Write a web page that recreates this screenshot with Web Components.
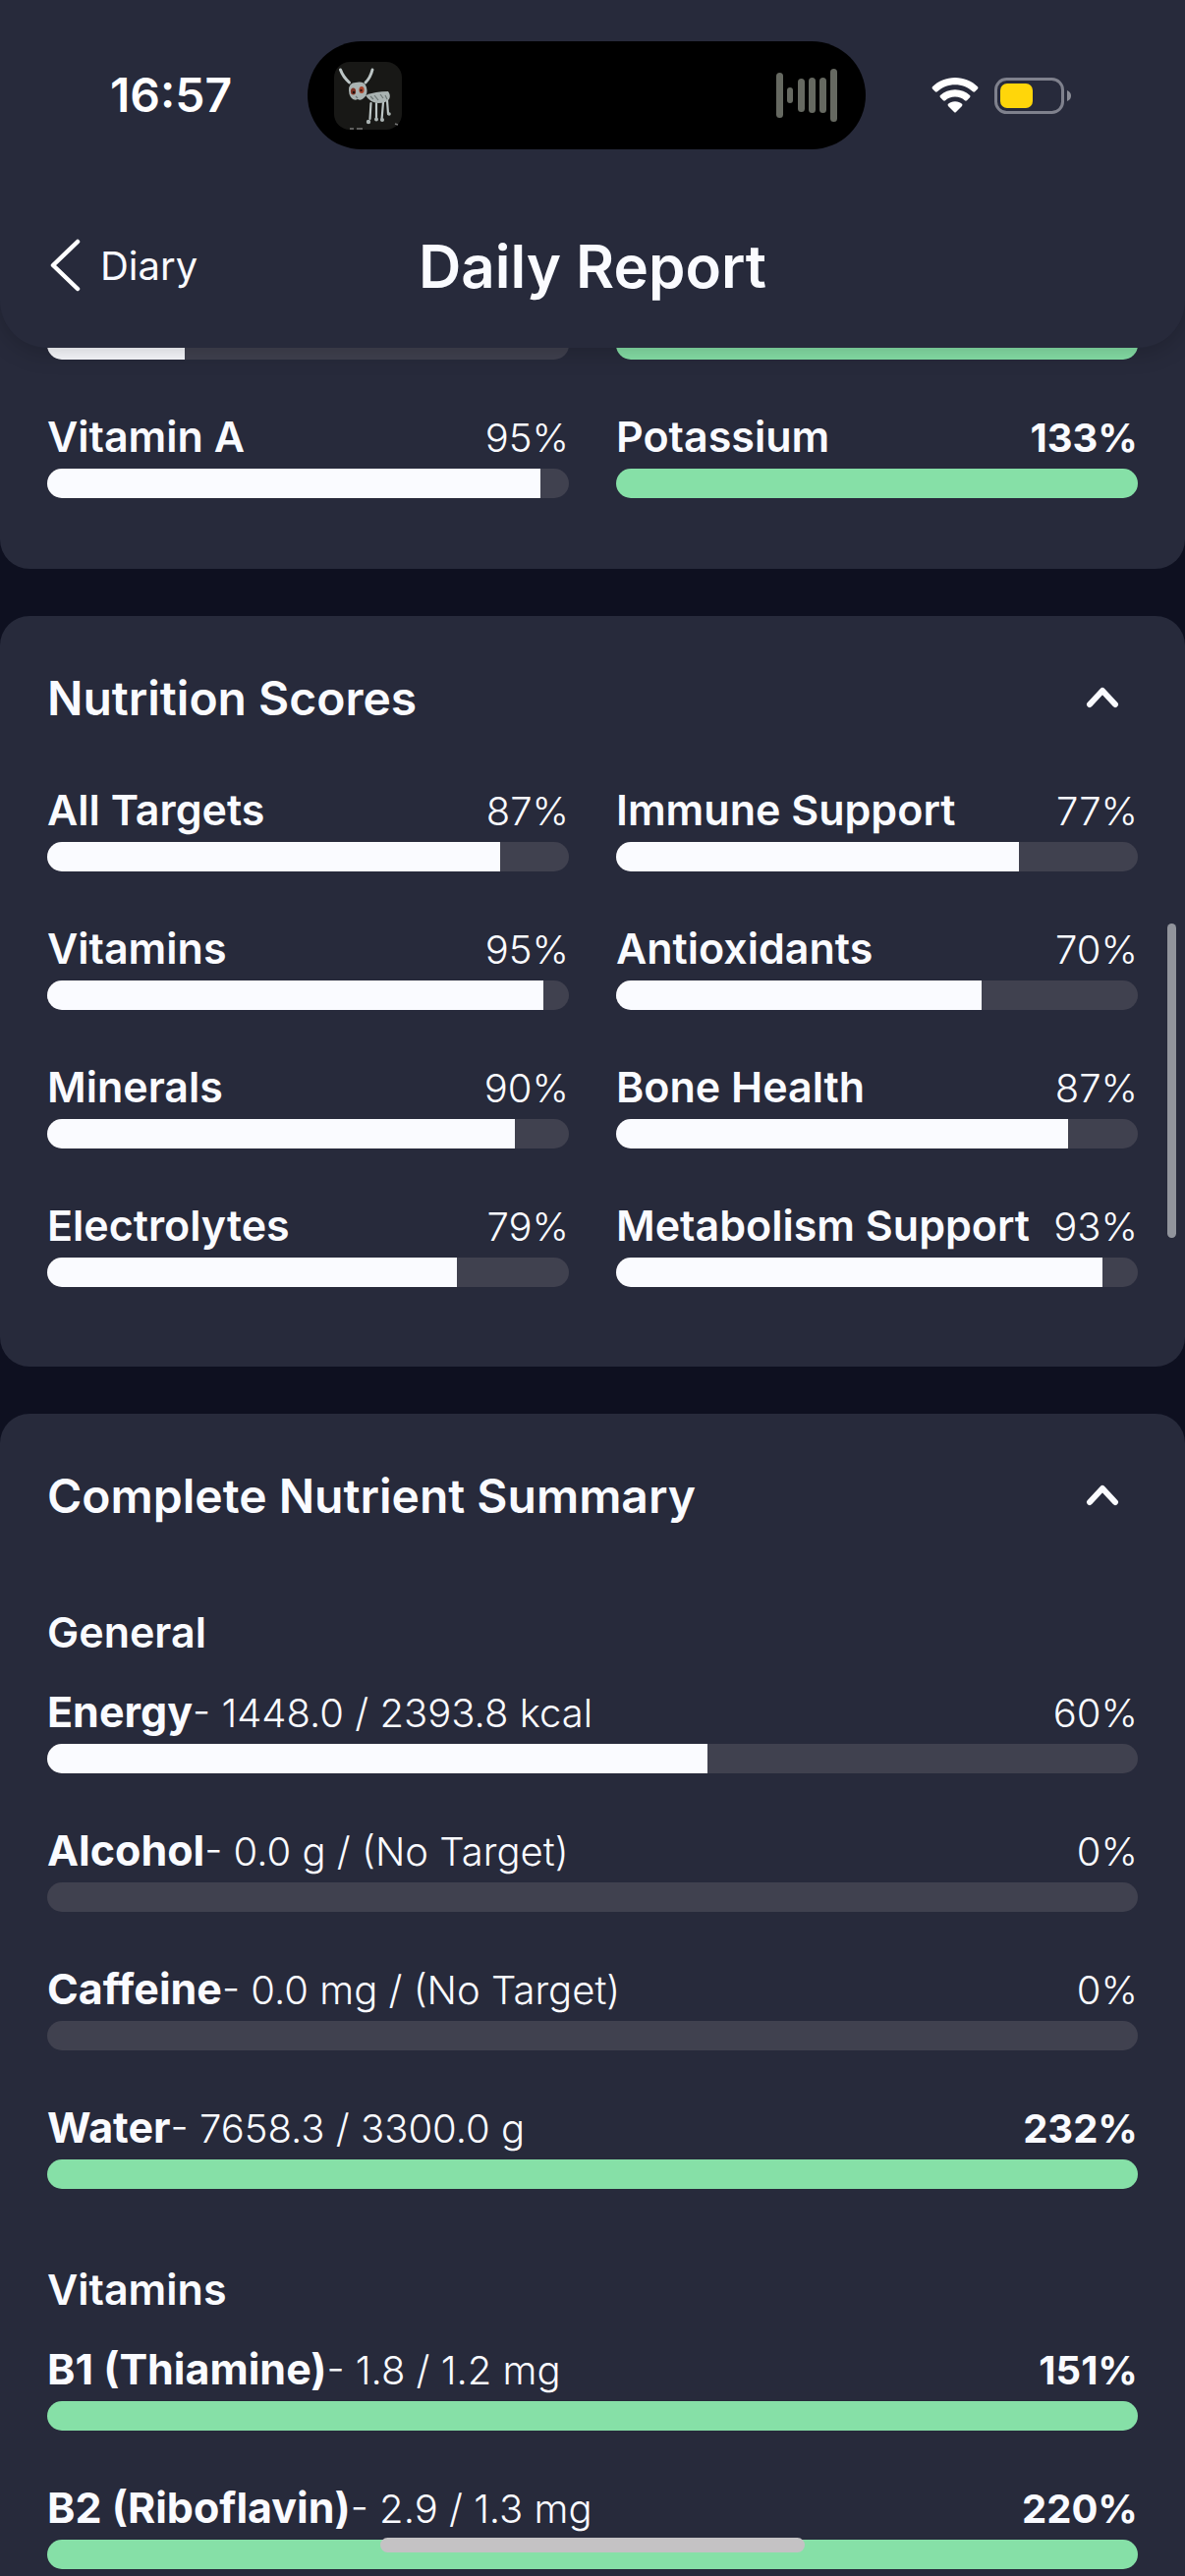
<!DOCTYPE html>
<html lang="en">
<head>
<meta charset="utf-8">
<meta name="viewport" content="width=device-width, initial-scale=1">
<title>Daily Report</title>
<style>
  html { background: #0e1020; }
  body {
    margin: 0;
    color: #fafbff;
    font-family: Inter, "Liberation Sans", sans-serif;
    --surface: #272a3b;
    --track: #40414f;
    --fill: #fafbff;
    --done: #86e0a7;
    --gutter: 48px;
  }
</style>
</head>
<body>
<daily-report>
  <status-bar slot="header"></status-bar>
  <nav-bar slot="header" back="Diary">Daily Report</nav-bar>

  <report-card class="clipped" tail>
    <metric-grid>
      <nutrient-metric percent="" fill="26.4"></nutrient-metric>
      <nutrient-metric percent="" fill="100" done></nutrient-metric>
      <nutrient-metric percent="95%" fill="94.5">Vitamin A</nutrient-metric>
      <nutrient-metric percent="133%" fill="100" done>Potassium</nutrient-metric>
    </metric-grid>
  </report-card>

  <report-card heading="Nutrition Scores">
    <metric-grid>
      <nutrient-metric percent="87%" fill="86.9">All Targets</nutrient-metric>
      <nutrient-metric percent="77%" fill="77.3">Immune Support</nutrient-metric>
      <nutrient-metric percent="95%" fill="95.1">Vitamins</nutrient-metric>
      <nutrient-metric percent="70%" fill="70.1">Antioxidants</nutrient-metric>
      <nutrient-metric percent="90%" fill="89.7">Minerals</nutrient-metric>
      <nutrient-metric percent="87%" fill="86.7">Bone Health</nutrient-metric>
      <nutrient-metric percent="79%" fill="78.5">Electrolytes</nutrient-metric>
      <nutrient-metric percent="93%" fill="93.3">Metabolism Support</nutrient-metric>
    </metric-grid>
  </report-card>

  <report-card heading="Complete Nutrient Summary" last>
    <metric-group heading="General">
      <nutrient-metric percent="60%" fill="60.5" amount="- 1448.0 / 2393.8 kcal">Energy</nutrient-metric>
      <nutrient-metric percent="0%" fill="0" amount="- 0.0 g / (No Target)">Alcohol</nutrient-metric>
      <nutrient-metric percent="0%" fill="0" amount="- 0.0 mg / (No Target)">Caffeine</nutrient-metric>
      <nutrient-metric percent="232%" fill="100" done amount="- 7658.3 / 3300.0 g">Water</nutrient-metric>
    </metric-group>
    <metric-group heading="Vitamins">
      <nutrient-metric percent="151%" fill="100" done amount="- 1.8 / 1.2 mg">B1 (Thiamine)</nutrient-metric>
      <nutrient-metric percent="220%" fill="100" done amount="- 2.9 / 1.3 mg">B2 (Riboflavin)</nutrient-metric>
    </metric-group>
  </report-card>
</daily-report>

<script>
const define = (name, render, setup) => customElements.define(name, class extends HTMLElement {
  connectedCallback() {
    if (this.shadowRoot) return;
    this.attachShadow({ mode: 'open' }).innerHTML = render(this);
    if (setup) setup(this);
  }
});

/* Page shell: pinned header, stack of cards, scroll thumb and home indicator */
define('daily-report', () => `
  <style>
    :host { display: flex; flex-direction: column; min-height: 100vh; }
    header {
      position: sticky; top: 0; z-index: 2;
      background: var(--surface);
      border-radius: 0 0 48px 48px;
      box-shadow: 0 4px 24px rgba(0, 0, 0, .2);
    }
    main { flex: 1; display: flex; flex-direction: column; gap: 48px; }
    ::slotted(.clipped) { margin-top: -76px; }
    .thumb { position: fixed; z-index: 3; top: 940px; right: 9px; width: 9px; height: 320px; border-radius: 5px; background: #91949c; }
    .home { position: fixed; z-index: 3; bottom: 24px; left: 50%; width: 432px; margin-left: -216px; height: 15px; border-radius: 8px; background: #c4c2c4; }
  </style>
  <header><slot name="header"></slot></header>
  <main><slot></slot></main>
  <div class="thumb"></div>
  <div class="home"></div>`);

define('status-bar', () => `
  <style>
    :host { display: flex; align-items: center; height: 110px; padding: 42px 116px 40px 112px; }
    time { flex: none; width: 201px; font-size: 48px; line-height: 60px; font-weight: 600; color: #fff; }
    .island { flex: none; box-sizing: border-box; display: flex; align-items: center; justify-content: space-between; width: 568px; height: 110px; padding: 0 28px 0 27px; border-radius: 55px; background: #000; }
    .icons { margin-left: auto; display: flex; align-items: center; gap: 16px; }
    svg { display: block; }
  </style>
  <time>16:57</time>
  <div class="island">
    <svg width="69" height="69" viewBox="0 0 69 69" aria-hidden="true">
      <rect width="69" height="69" rx="16" fill="#181816"/>
      <g fill="none" stroke="#bcc5c5" stroke-linecap="round">
        <path d="M6.500 8 Q9 15 15.500 21" stroke-width="3"/>
        <path d="M39 8 Q37 16 32 21" stroke-width="3"/>
        <path d="M37.500 42 L36.500 58 M43 42 L43 58 M50 41 L48.500 59 M54 39 L55 53" stroke-width="2.200"/>
      </g>
      <path d="M15 29 Q15 21 22 21 Q31 19 33 26 Q35 33 30 37 Q27 40 24 38 Q20 40 17 36 Q15 33 15 29Z" fill="#aab3b2"/>
      <path d="M32 34 Q42 30 55 30 Q58 34 56 38 Q53 42 45 42 Q36 41 32 34Z" fill="#aab3b2"/>
      <path d="M37 35l3 3M41 34l4 5M47 33l3 4M52 34l2 4M22 35l2 2" stroke="#6d7675" stroke-width="1.200"/>
      <ellipse cx="19.500" cy="30" rx="2.600" ry="3.600" fill="#7e3224"/>
      <ellipse cx="28" cy="28.500" rx="2.600" ry="3.600" fill="#a8452c"/>
      <circle cx="20" cy="31" r="1.300" fill="#20100e"/><circle cx="27.500" cy="29" r="1.200" fill="#3a1511"/>
      <circle cx="35" cy="61" r="2.200" fill="#aab3b2"/><circle cx="43" cy="58.500" r="2" fill="#aab3b2"/><circle cx="49" cy="59" r="2" fill="#aab3b2"/><circle cx="56" cy="53" r="1.800" fill="#aab3b2"/>
      <path d="M16 68h4M23 68h6M62 63l3 1" stroke="#777" stroke-width="1.500"/>
    </svg>
    <svg width="63" height="56" viewBox="0 0 63 56" aria-hidden="true">
      <g fill="#666961">
        <rect x="0" y="5" width="7" height="46" rx="3.500"/>
        <rect x="11" y="20" width="6" height="16" rx="3"/>
        <rect x="22" y="11" width="7" height="34" rx="3.500"/>
        <rect x="33" y="10" width="7" height="36" rx="3.500"/>
        <rect x="44" y="10" width="7" height="36" rx="3.500"/>
        <rect x="55" y="1" width="7" height="54" rx="3.500"/>
      </g>
    </svg>
  </div>
  <div class="icons">
    <svg width="48" height="36" viewBox="0 0 48 36" aria-label="Wi-Fi" role="img">
      <g fill="#fff">
        <path d="M24 0 C33 0 41 3.500 47 9.200 Q48 10.300 47 11.400 L44.200 14.300 Q43.200 15.200 42.100 14.300 C37 9.600 31 7.200 24 7.200 C17 7.200 11 9.600 5.900 14.300 Q4.800 15.200 3.800 14.300 L1 11.400 Q0 10.300 1 9.200 C7 3.500 15 0 24 0Z"/>
        <path d="M24 12.300 C30 12.300 35 14.500 39 18 Q40.100 19.100 39 20.200 L36 23.200 Q35 24.100 33.900 23.200 C31 20.800 28 19.500 24 19.500 C20 19.500 17 20.800 14.100 23.200 Q13 24.100 12 23.200 L9 20.200 Q7.900 19.100 9 18 C13 14.500 18 12.300 24 12.300Z"/>
        <path d="M24 24.300 C27 24.300 29.200 25.300 31 26.800 Q32 27.900 31 29 L25 35 Q24 36 23 35 L17 29 Q16 27.900 17 26.800 C18.800 25.300 21 24.300 24 24.300Z"/>
      </g>
    </svg>
    <svg width="78" height="37" viewBox="0 0 78 37" aria-label="Battery" role="img">
      <rect x="1.500" y="1.500" width="68" height="34" rx="11" fill="none" stroke="#7f818d" stroke-width="3"/>
      <path d="M74 13 Q78 14.500 78 18.500 Q78 22.500 74 24Z" fill="#8a8c96"/>
      <rect x="6" y="6" width="33" height="25" rx="7" fill="#ffd60a"/>
    </svg>
  </div>`);

define('nav-bar', el => `
  <style>
    :host { display: grid; grid-template-columns: 1fr auto 1fr; align-items: center; height: 158px; padding: 0 var(--gutter) 4px; }
    a { display: flex; align-items: center; gap: 19px; color: inherit; text-decoration: none; font-size: 40px; line-height: 52px; }
    h1 { margin: 0; font-size: 60px; line-height: 72px; font-weight: 600; }
    svg { display: block; flex: none; }
  </style>
  <a href="#diary">
    <svg width="35" height="56" viewBox="0 0 35 56" fill="none" stroke="#fff" stroke-width="4.500" stroke-linecap="round" stroke-linejoin="round" aria-hidden="true"><path d="M31 3 L6 27 L31 51"/></svg>
    <span>${el.getAttribute('back')}</span>
  </a>
  <h1><slot></slot></h1>`);

define('report-card', el => {
  const heading = el.getAttribute('heading');
  return `
  <style>
    :host { display: block; padding: 54px var(--gutter) 81px; border-radius: 30px; background: var(--surface); }
    :host([tail]) { padding: 0 var(--gutter) 72px; }
    :host([last]) { flex: 1; padding-bottom: 6px; border-radius: 30px 30px 0 0; }
    h2 { margin: 0 0 58px; font-size: 48px; line-height: 60px; font-weight: 600; }
    :host([last]) h2 { margin-bottom: 82px; }
    button { display: flex; align-items: center; justify-content: space-between; width: 100%; padding: 0 18px 0 0; border: 0; background: none; color: inherit; font: inherit; text-align: left; cursor: pointer; }
    svg { display: block; }
    .body { display: grid; gap: 76px; }
    .body[hidden] { display: none; }
  </style>
  ${heading ? `<h2><button type="button" aria-expanded="true">
    <span>${heading}</span>
    <svg width="36" height="24" viewBox="0 0 36 24" fill="none" stroke="#fafbff" stroke-width="6" stroke-linecap="round" stroke-linejoin="round" aria-hidden="true"><path d="M5 18 L18 4 L31 18"/></svg>
  </button></h2>` : ''}
  <div class="body"><slot></slot></div>`;
}, el => {
  const button = el.shadowRoot.querySelector('button');
  const body = el.shadowRoot.querySelector('.body');
  if (button) button.addEventListener('click', () => {
    body.hidden = !body.hidden;
    button.setAttribute('aria-expanded', String(!body.hidden));
  });
});

define('metric-grid', () => `
  <style>
    :host { display: grid; grid-template-columns: 1fr 1fr; gap: 53px 48px; }
  </style>
  <slot></slot>`);

define('metric-group', el => `
  <style>
    :host { display: block; }
    h3 { margin: 0 0 30px; font-size: 43px; line-height: 52px; font-weight: 600; }
    div { display: grid; gap: 53px; }
  </style>
  <h3>${el.getAttribute('heading')}</h3>
  <div><slot></slot></div>`);

define('nutrient-metric', el => {
  const fill = el.getAttribute('fill');
  const amount = el.getAttribute('amount');
  return `
  <style>
    :host { display: block; min-width: 0; }
    .row { display: flex; align-items: baseline; justify-content: space-between; height: 50px; margin-bottom: 8px; font-size: 43px; line-height: 50px; white-space: nowrap; }
    .name { font-weight: 600; }
    :host([amount]) .name { font-weight: 700; }
    .amount, .percent { font-size: 40px; font-weight: 300; }
    :host([done]) .percent { font-weight: 700; }
    .track { height: 30px; border-radius: 15px; overflow: hidden; background: var(--track); }
    .fill { height: 100%; width: ${fill}%; background: var(--fill); }
    :host([done]) .fill { background: var(--done); }
  </style>
  <div class="row">
    <span><span class="name"><slot></slot></span>${amount ? `<span class="amount">${amount}</span>` : ''}</span>
    <span class="percent">${el.getAttribute('percent')}</span>
  </div>
  <div class="track" role="progressbar" aria-valuemin="0" aria-valuemax="100" aria-valuenow="${fill}"><div class="fill"></div></div>`;
});
</script>
</body>
</html>
